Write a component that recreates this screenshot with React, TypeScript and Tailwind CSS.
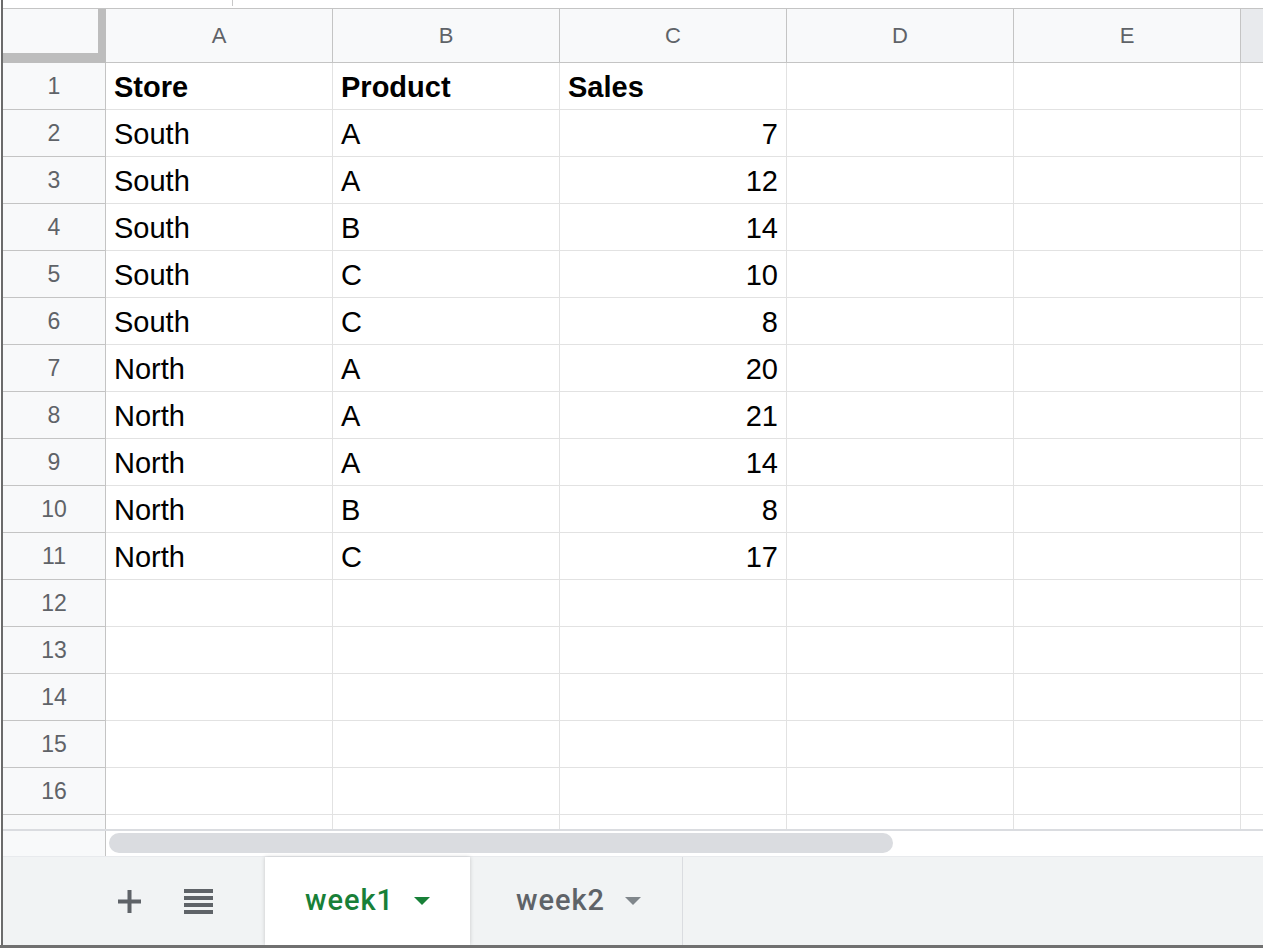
// ============================================
// SHEET GRID COMPONENT
// Spreadsheet view with frozen header, grid and sheet tabs
// ============================================

import React from 'react';

interface SalesRow {
  store: string;
  product: string;
  sales: number | string;
}

const rows: SalesRow[] = [
  { store: 'South', product: 'A', sales: 7 },
  { store: 'South', product: 'A', sales: 12 },
  { store: 'South', product: 'B', sales: 14 },
  { store: 'South', product: 'C', sales: 10 },
  { store: 'South', product: 'C', sales: 8 },
  { store: 'North', product: 'A', sales: 20 },
  { store: 'North', product: 'A', sales: 21 },
  { store: 'North', product: 'A', sales: 14 },
  { store: 'North', product: 'B', sales: 8 },
  { store: 'North', product: 'C', sales: 17 },
];

const columns = ['A', 'B', 'C', 'D', 'E'];
const EMPTY_ROWS = [12, 13, 14, 15, 16];

const cellFont = { fontFamily: '"Liberation Sans", Arial, sans-serif' };
const tabFont = { fontFamily: 'Roboto, "Open Sans", sans-serif' };

const RowHeader: React.FC<{ n: number }> = ({ n }) => (
  <div className="w-[103px] shrink-0 bg-[#f8f9fa] border-r border-b border-[#c4c4c4] flex items-center justify-center text-[23px] text-[#5f6368]">
    {n}
  </div>
);

const Cell: React.FC<{ children?: React.ReactNode; bold?: boolean; right?: boolean }> = ({ children, bold, right }) => (
  <div
    className={`w-[227px] shrink-0 border-r border-b border-[#e2e2e2] flex items-center pt-1 text-[29px] text-black
                ${right ? 'justify-end pr-[8px]' : 'pl-[8px]'} ${bold ? 'font-bold' : ''}`}
  >
    {children}
  </div>
);

const GridRow: React.FC<{ n: number; cells: (string | number)[]; bold?: boolean }> = ({ n, cells, bold }) => (
  <div className="h-[47px] flex shrink-0">
    <RowHeader n={n} />
    <Cell bold={bold}>{cells[0]}</Cell>
    <Cell bold={bold}>{cells[1]}</Cell>
    <Cell bold={bold} right={!bold}>{cells[2]}</Cell>
    <Cell />
    <Cell />
    <div className="flex-1 border-b border-[#e2e2e2]" />
  </div>
);

const Caret: React.FC<{ color: string }> = ({ color }) => (
  <svg width="16" height="8" viewBox="0 0 16 8">
    <path d="M0 0 L16 0 L8 8 Z" fill={color} />
  </svg>
);

const App: React.FC = () => {
  return (
    <div className="w-[1263px] h-[948px] flex flex-col bg-white overflow-hidden" style={cellFont}>
      <div className="flex flex-1 min-h-0">
        {/* Window edge */}
        <div className="w-px bg-white" />
        <div className="w-[2px] bg-[#6b6b6b]" />

        <div className="flex-1 flex flex-col min-w-0">
          {/* Toolbar remnant */}
          <div className="h-[8px] pl-[229px] flex">
            <div className="w-px h-[6px] bg-[#c8c8c8]" />
          </div>

          {/* Column headers */}
          <div className="flex h-[55px] border-t border-[#c4c4c4] shrink-0">
            <div className="w-[103px] h-[54px] shrink-0 bg-[#f8f9fa] border-r-[8px] border-b-[10px] border-[#bdbdbd]" />
            {columns.map((c) => (
              <div
                key={c}
                className="w-[227px] h-[54px] shrink-0 bg-[#f8f9fa] border-r border-b border-[#c4c4c4] flex items-center justify-center text-[22px] text-[#5f6368]"
              >
                {c}
              </div>
            ))}
            <div className="flex-1 h-[54px] bg-[#e8eaed] border-b border-[#c4c4c4]" />
          </div>

          {/* Data rows */}
          <GridRow n={1} cells={['Store', 'Product', 'Sales']} bold />
          {rows.map((r, i) => (
            <GridRow key={i} n={i + 2} cells={[r.store, r.product, r.sales]} />
          ))}
          {EMPTY_ROWS.map((n) => (
            <GridRow key={n} n={n} cells={['', '', '']} />
          ))}

          {/* Partially visible row */}
          <div className="h-[14px] overflow-hidden shrink-0 flex flex-col">
            <GridRow n={17} cells={['', '', '']} />
          </div>
          <div className="h-[2px] bg-[#dadce0] shrink-0" />

          {/* Horizontal scrollbar */}
          <div className="h-[25px] flex shrink-0">
            <div className="w-[103px] bg-[#f8f9fa] border-r border-[#c4c4c4]" />
            <div className="flex-1 pl-[3px] pt-[2px]">
              <div className="w-[784px] h-[20px] rounded-full bg-[#dadce0]" />
            </div>
          </div>

          {/* Sheet tabs */}
          <div className="flex-1 flex bg-[#f1f3f4] border-t border-[#e8eaed]" style={tabFont}>
            <div className="w-[262px] flex items-center pl-[115px] gap-[43px]">
              <svg width="23" height="23" viewBox="0 0 23 23">
                <rect x="9.5" y="0" width="4" height="23" fill="#5f6368" />
                <rect x="0" y="9.5" width="23" height="4" fill="#5f6368" />
              </svg>
              <svg width="29" height="25" viewBox="0 0 29 25">
                <rect x="0" y="0" width="29" height="4" fill="#5f6368" />
                <rect x="0" y="7" width="29" height="4" fill="#5f6368" />
                <rect x="0" y="14" width="29" height="4" fill="#5f6368" />
                <rect x="0" y="21" width="29" height="4" fill="#5f6368" />
              </svg>
            </div>
            <div className="w-[205px] mr-[5px] bg-white shadow-[0_0_4px_rgba(0,0,0,0.18)] flex items-center justify-center gap-[20px]">
              <span className="text-[29px] font-medium tracking-[1px] text-[#188038]">week1</span>
              <Caret color="#188038" />
            </div>
            <div className="w-[208px] border-r border-[#dadce0] flex items-center justify-center gap-[20px]">
              <span className="text-[29px] font-medium tracking-[1px] text-[#5f6368]">week2</span>
              <Caret color="#80868b" />
            </div>
          </div>
        </div>
      </div>
      <div className="h-[3px] bg-[#707070] shrink-0" />
    </div>
  );
};

export default App;
